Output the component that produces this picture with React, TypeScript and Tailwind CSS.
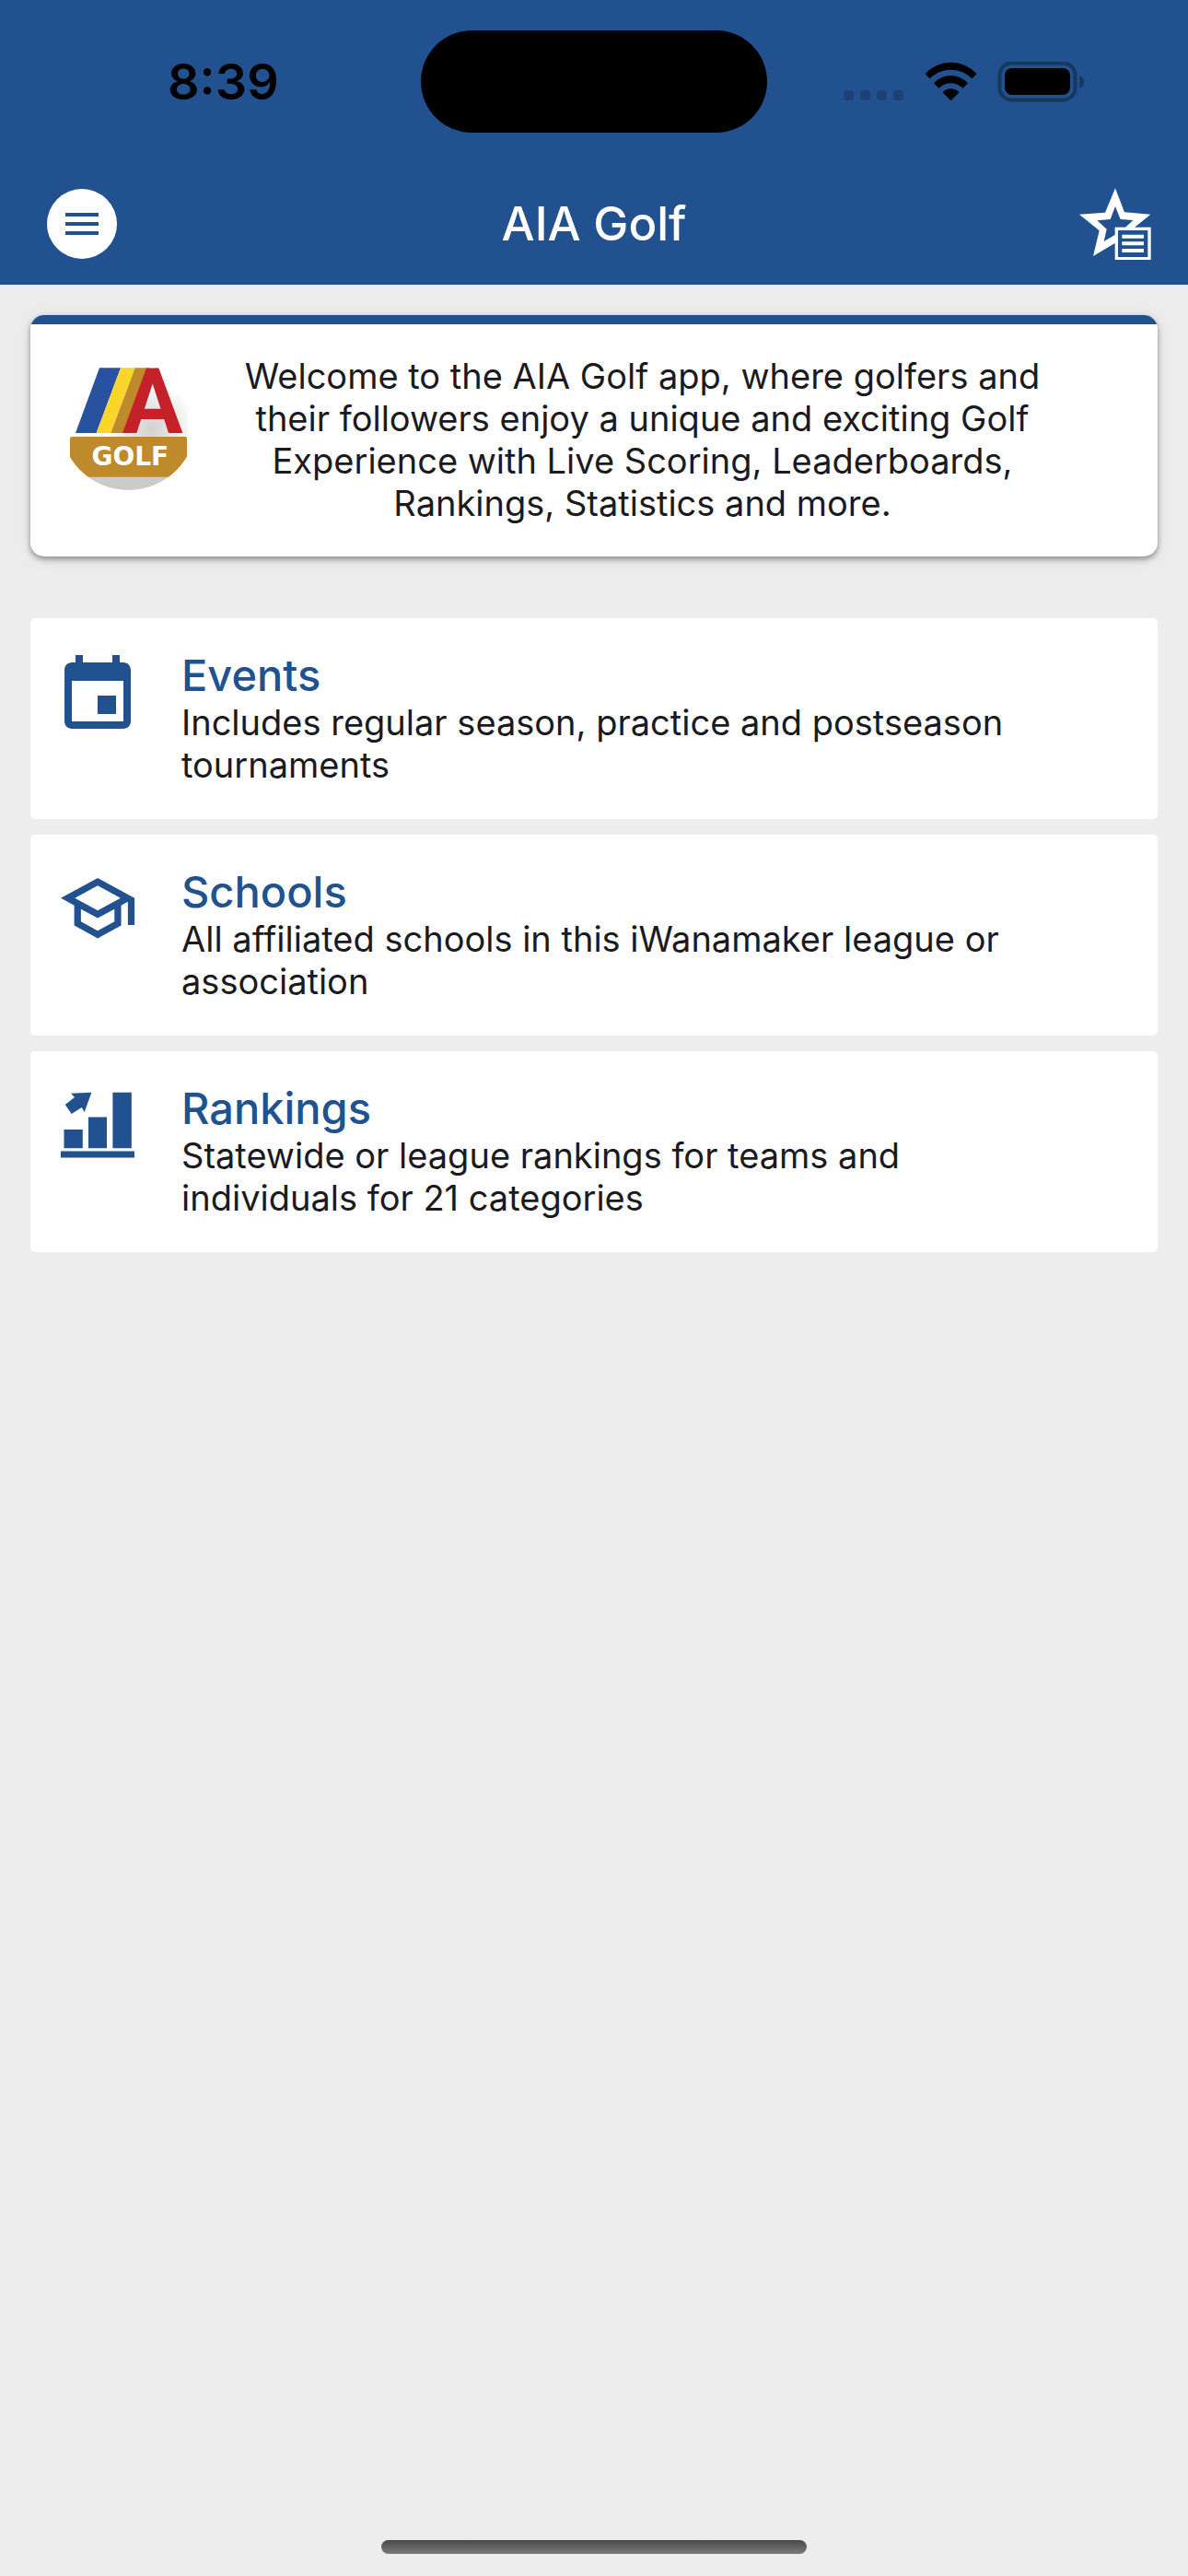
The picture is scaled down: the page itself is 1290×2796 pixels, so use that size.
import type { ReactNode } from "react";

const StatusIcons = () => {
  return (
    <svg width="264" height="44" viewBox="0 0 264 44" aria-hidden="true">
      <g fill="#1b4273">
        <rect x="0" y="31" width="11" height="11" rx="4" />
        <rect x="18" y="31" width="11" height="11" rx="4" />
        <rect x="36" y="31" width="11" height="11" rx="4" />
        <rect x="54" y="31" width="11" height="11" rx="4" />
      </g>
      <g transform="translate(88 0)">
        <path d="M0.5 13A38 38 0 0 1 56.5 13L51.5 18.3A32.6 32.6 0 0 0 5.5 18.3Z" />
        <path d="M10 23.3A25 25 0 0 1 47 23.3L41.5 28.8A18 18 0 0 0 15.5 28.8Z" />
        <path d="M19.5 33.3A12 12 0 0 1 37.5 33.3L28.5 42.3Z" />
      </g>
      <rect x="169.500" y="1.500" width="82" height="40" rx="13" fill="none" stroke="#17375d" strokeWidth="4" />
      <rect x="175" y="7" width="71" height="29" rx="8" />
      <path d="M256 15Q261 17 261 22T256 28.5Z" fill="#17375d" />
    </svg>
  );
};

const StarListIcon = () => {
  return (
    <svg width="78" height="78" viewBox="65 43 234 234" aria-hidden="true">
      <path
        fill="#fff"
        fillRule="evenodd"
        d="M182 44L212 122L297 129L233 181L254 265L182 222L110 265L130 182L65 129L149 123ZM182 103L166 145L123 149L154 177L145 217L182 195L215 217L208 178L240 148L199 145Z"
      />
      <rect x="186" y="176" width="107" height="97" fill="#21528f" stroke="#fff" strokeWidth="10" />
      <path d="M204 201H275M204 224H275M204 247H275" stroke="#fff" strokeWidth="12" />
    </svg>
  );
};

const GolfLogo = () => {
  return (
    <svg
      width="128"
      height="134"
      viewBox="48 57 384 402"
      className="shrink-0 overflow-visible"
      role="img"
      aria-label="AIA Golf logo"
    >
      <defs>
        <radialGradient id="ball" gradientUnits="userSpaceOnUse" cx="310" cy="255" r="150">
          <stop offset="0" stopColor="#d2d2d2" />
          <stop offset="0.5" stopColor="#e6e6e6" />
          <stop offset="1" stopColor="#fff" />
        </radialGradient>
        <clipPath id="round">
          <circle cx="238" cy="234" r="222" />
        </clipPath>
      </defs>
      <g clipPath="url(#round)">
        <rect x="48" y="57" width="384" height="240" fill="url(#ball)" />
        <rect x="48" y="405" width="384" height="60" fill="#cbcbcb" />
        <rect x="48" y="282" width="381" height="131" rx="6" fill="#bf8a2b" />
      </g>
      <path d="M144 58H213L134 270H66Z" fill="#2852a0" />
      <path d="M213 58H260L181 270H134Z" fill="#fad62b" />
      <path d="M260 58H304L225 270H181Z" fill="#bf8a2b" />
      <text x="317" y="270" textAnchor="middle" fill="#c52128" className="font-['Roboto'] text-[294px] font-bold">
        A
      </text>
      <text x="244" y="375" textAnchor="middle" fill="#fff" className="font-['DejaVu_Sans'] text-[84px] font-bold">
        GOLF
      </text>
    </svg>
  );
};

const EventIcon = () => {
  return (
    <svg width="96" height="96" viewBox="0 0 24 24" fill="currentColor" aria-hidden="true">
      <path d="M17 12h-5v5h5v-5zM16 1v2H8V1H6v2H5c-1.110 0-1.990.9-1.990 2L3 19c0 1.100.890 2 2 2h14c1.100 0 2-.9 2-2V5c0-1.100-.9-2-2-2h-1V1h-2zm3 18H5V8h14v11z" />
    </svg>
  );
};

const SchoolIcon = () => {
  return (
    <svg width="96" height="96" viewBox="0 0 96 96" fill="currentColor" aria-hidden="true">
      <path
        transform="translate(4.400 0) scale(3.640)"
        d="M12 3 1 9l4 2.180v6L12 21l7-3.820v-6l2-1.090V17h2V9L12 3zm6.820 6L12 12.720 5.180 9 12 5.280 18.820 9zM17 15.990l-5 2.730-5-2.730v-3.720L12 15l5-2.730v3.720z"
      />
    </svg>
  );
};

const RankingIcon = () => {
  return (
    <svg width="96" height="96" viewBox="0 0 96 96" fill="currentColor" aria-hidden="true">
      <path d="M8 72.500h80v7H8zM11.500 49h20.300v20.300H11.500zM38 35.500h20v33.800H38zM64.400 8.800h20.400v60.500H64.400z" />
      <path d="M41.400 8.800L19 9.800L23 14L12.700 22L19.700 32L30.700 25L33.700 30Z" />
    </svg>
  );
};

type MenuCardProps = {
  icon: ReactNode;
  title: string;
  text: string;
};

const MenuCard = ({ icon, title, text }: MenuCardProps) => {
  return (
    <a href="#" className="flex items-start gap-[43px] rounded-[5px] bg-white pt-[34px] pr-[90px] pb-9 pl-[25px]">
      <span className="shrink-0 pt-0.5 text-[#21528f]">{icon}</span>
      <span className="block">
        <span className="block text-[47px] leading-[56px] font-medium text-[#21528f]">{title}</span>
        <span className="block text-[38px] leading-[46px] text-[#1b1b1f]">{text}</span>
      </span>
    </a>
  );
};

const items = [
  { icon: <EventIcon />, title: "Events", text: "Includes regular season, practice and postseason tournaments" },
  { icon: <SchoolIcon />, title: "Schools", text: "All affiliated schools in this iWanamaker league or association" },
  { icon: <RankingIcon />, title: "Rankings", text: "Statewide or league rankings for teams and individuals for 21 categories" },
];

const App = () => {
  return (
    <div className="flex min-h-screen flex-col bg-[#ededed] font-['Inter',sans-serif]">
      <header className="bg-[#21528f] pt-[33px] pb-[27px]">
        <div className="grid grid-cols-[1fr_376px_1fr] items-center">
          <div className="pl-[182px] text-[54px] leading-[64px] font-semibold text-black">8:39</div>
          <div className="h-[111px] rounded-full bg-black" />
          <div className="pl-[83px]">
            <StatusIcons />
          </div>
        </div>
        <div className="grid grid-cols-[1fr_auto_1fr] items-center px-10 pt-[60px]">
          <button
            type="button"
            aria-label="Menu"
            className="ml-[11px] flex size-[76px] flex-col items-center justify-center gap-1.5 rounded-full bg-white"
          >
            <span className="h-1 w-9 bg-[#21528f]" />
            <span className="h-1 w-9 bg-[#21528f]" />
            <span className="h-1 w-9 bg-[#21528f]" />
          </button>
          <h1 className="text-[51px] leading-[60px] font-medium text-white">AIA Golf</h1>
          <button type="button" aria-label="Favorites" className="justify-self-end">
            <StarListIcon />
          </button>
        </div>
      </header>

      <main className="flex-1 px-[33px] pt-[33px]">
        <section className="overflow-hidden rounded-[15px] bg-white shadow-[0_3px_6px_rgba(0,0,0,0.4),0_2px_24px_rgba(0,0,0,0.06)]">
          <div className="h-2.5 bg-[#21528f]" />
          <div className="flex items-start pt-[33px] pr-[66px] pb-[35px] pl-[43px]">
            <div className="pt-3.5">
              <GolfLogo />
            </div>
            <p className="flex-1 px-11 text-center text-[38px] leading-[46px] text-[#1b1b1f]">
              Welcome to the AIA Golf app, where golfers and their followers enjoy a unique and exciting Golf Experience
              with Live Scoring, Leaderboards, Rankings, Statistics and more.
            </p>
          </div>
        </section>

        <nav className="mt-[67px] flex flex-col gap-[17px]">
          {items.map((item) => (
            <MenuCard key={item.title} {...item} />
          ))}
        </nav>
      </main>

      <footer className="flex justify-center pb-6">
        <div className="h-[15px] w-[462px] rounded-full bg-linear-to-b from-[#4a4a4a] to-[#7a7a7a]" />
      </footer>
    </div>
  );
};

export default App;
